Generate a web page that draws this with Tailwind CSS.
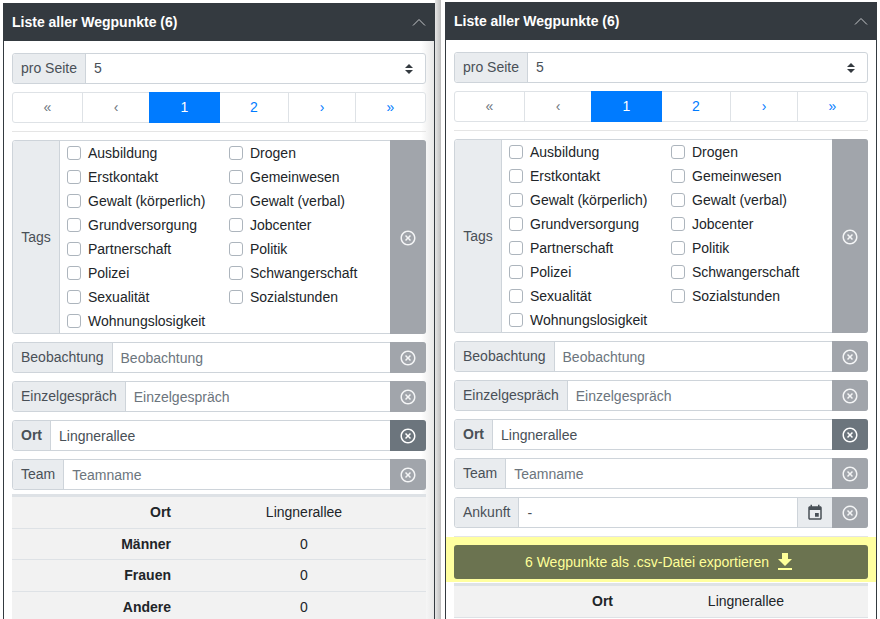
<!DOCTYPE html>
<html lang="de">
<head>
    <meta charset="UTF-8">
    <title>Liste aller Wegpunkte</title>
    <script src="https://cdn.jsdelivr.net/npm/@tailwindcss/browser@4"></script>
</head>
<body class="bg-white h-[619px] w-[880px] overflow-hidden flex font-['Liberation_Sans',Arial,sans-serif] text-[14px] leading-[21px] text-[#212529]">
    <!-- Linke Liste -->
    <section class="ml-[3px] mt-[3px] w-[432px] shrink-0 border-x border-[#343a40] h-[616px] overflow-hidden bg-gradient-to-r from-white via-white via-[97%] to-[#e8e8e8]">
        <header class="h-[38px] bg-[#343a40] text-white flex items-center justify-between pl-2 pr-2">
            <h2 class="font-bold text-[14px]">Liste aller Wegpunkte (6)</h2>
            <svg class="w-[14px] h-[8px]" viewBox="0 0 14 8" fill="none" stroke="#c4c6c9" stroke-width="1"><path d="M1 7.5 7 1.5l6 6"></path></svg>
        </header>
        <div class="px-2 pt-3">
            <div class="flex h-[31px] border border-[#ced4da] rounded-[3px] bg-white">
                <span class="bg-[#e9ecef] text-[#495057] px-2 pb-px flex items-center border-r border-[#ced4da] rounded-l-[3px]">pro Seite</span>
                <div class="flex-1 flex items-center justify-between pl-2 pr-3 text-[#495057]">
                    <span>5</span>
                    <svg class="w-[8px] h-[10px]" viewBox="0 0 8 10" fill="#343a40"><path d="M4 0 8 4H0zM4 10 0 6h8z"></path></svg>
                </div>
            </div>
            <nav class="mt-2 h-[31px] grid grid-cols-[70px_66px_71px_69px_67px_69px] border border-[#dee2e6] rounded-[3px] bg-white text-center text-[#007bff] items-stretch w-[414px]">
                <span class="flex items-center justify-center text-[#6c757d] border-r border-[#dee2e6]">«</span>
                <span class="flex items-center justify-center text-[#6c757d]">‹</span>
                <span class="flex items-center justify-center bg-[#007bff] text-white -my-px">1</span>
                <span class="flex items-center justify-center border-r border-[#dee2e6]">2</span>
                <span class="flex items-center justify-center border-r border-[#dee2e6]">›</span>
                <span class="flex items-center justify-center">»</span>
            </nav>
            <hr class="mt-2 mb-2 border-[#e5e5e5]">
            <div class="flex h-[194px] border border-[#ced4da] rounded-[3px] bg-white">
                <span class="w-[47px] bg-[#e9ecef] text-[#495057] flex items-center justify-center border-r border-[#ced4da] rounded-l-[3px]">Tags</span>
                <div class="flex-1 grid grid-cols-[162px_1fr] auto-rows-[24px] pl-[7px]">
                    <label class="flex items-center gap-[7px]"><input type="checkbox" class="appearance-none w-[14px] h-[14px] bg-white border border-[#adb5bd] rounded-[3px]">Ausbildung</label>
                    <label class="flex items-center gap-[7px]"><input type="checkbox" class="appearance-none w-[14px] h-[14px] bg-white border border-[#adb5bd] rounded-[3px]">Drogen</label>
                    <label class="flex items-center gap-[7px]"><input type="checkbox" class="appearance-none w-[14px] h-[14px] bg-white border border-[#adb5bd] rounded-[3px]">Erstkontakt</label>
                    <label class="flex items-center gap-[7px]"><input type="checkbox" class="appearance-none w-[14px] h-[14px] bg-white border border-[#adb5bd] rounded-[3px]">Gemeinwesen</label>
                    <label class="flex items-center gap-[7px]"><input type="checkbox" class="appearance-none w-[14px] h-[14px] bg-white border border-[#adb5bd] rounded-[3px]">Gewalt (körperlich)</label>
                    <label class="flex items-center gap-[7px]"><input type="checkbox" class="appearance-none w-[14px] h-[14px] bg-white border border-[#adb5bd] rounded-[3px]">Gewalt (verbal)</label>
                    <label class="flex items-center gap-[7px]"><input type="checkbox" class="appearance-none w-[14px] h-[14px] bg-white border border-[#adb5bd] rounded-[3px]">Grundversorgung</label>
                    <label class="flex items-center gap-[7px]"><input type="checkbox" class="appearance-none w-[14px] h-[14px] bg-white border border-[#adb5bd] rounded-[3px]">Jobcenter</label>
                    <label class="flex items-center gap-[7px]"><input type="checkbox" class="appearance-none w-[14px] h-[14px] bg-white border border-[#adb5bd] rounded-[3px]">Partnerschaft</label>
                    <label class="flex items-center gap-[7px]"><input type="checkbox" class="appearance-none w-[14px] h-[14px] bg-white border border-[#adb5bd] rounded-[3px]">Politik</label>
                    <label class="flex items-center gap-[7px]"><input type="checkbox" class="appearance-none w-[14px] h-[14px] bg-white border border-[#adb5bd] rounded-[3px]">Polizei</label>
                    <label class="flex items-center gap-[7px]"><input type="checkbox" class="appearance-none w-[14px] h-[14px] bg-white border border-[#adb5bd] rounded-[3px]">Schwangerschaft</label>
                    <label class="flex items-center gap-[7px]"><input type="checkbox" class="appearance-none w-[14px] h-[14px] bg-white border border-[#adb5bd] rounded-[3px]">Sexualität</label>
                    <label class="flex items-center gap-[7px]"><input type="checkbox" class="appearance-none w-[14px] h-[14px] bg-white border border-[#adb5bd] rounded-[3px]">Sozialstunden</label>
                    <label class="flex items-center gap-[7px]"><input type="checkbox" class="appearance-none w-[14px] h-[14px] bg-white border border-[#adb5bd] rounded-[3px]">Wohnungslosigkeit</label>
                </div>
                <button class="w-[36px] -my-px -mr-px pt-px bg-[#a1a5ab] flex items-center justify-center rounded-r-[3px]"><svg class="w-[18px] h-[18px]" viewBox="0 0 24 24" fill="#f4f5f6"><path d="M14.59 8 12 10.59 9.41 8 8 9.41 10.59 12 8 14.59 9.41 16 12 13.41 14.59 16 16 14.59 13.41 12 16 9.41 14.59 8zM12 2C6.47 2 2 6.47 2 12s4.47 10 10 10 10-4.47 10-10S17.53 2 12 2zm0 18c-4.41 0-8-3.59-8-8s3.59-8 8-8 8 3.59 8 8-3.59 8-8 8z"></path></svg></button>
            </div>
            <div class="mt-2 flex h-[31px] border border-[#ced4da] rounded-[3px] bg-white">
                <span class="bg-[#e9ecef] text-[#495057] px-2 flex items-center pb-px border-r border-[#ced4da] rounded-l-[3px]">Beobachtung</span>
                <span class="flex-1 pl-2 pt-px flex items-center text-[#6c757d]">Beobachtung</span>
                <button class="w-[36px] -my-px -mr-px bg-[#a1a5ab] flex items-center justify-center rounded-r-[3px]"><svg class="w-[18px] h-[18px]" viewBox="0 0 24 24" fill="#f4f5f6"><path d="M14.59 8 12 10.59 9.41 8 8 9.41 10.59 12 8 14.59 9.41 16 12 13.41 14.59 16 16 14.59 13.41 12 16 9.41 14.59 8zM12 2C6.47 2 2 6.47 2 12s4.47 10 10 10 10-4.47 10-10S17.53 2 12 2zm0 18c-4.41 0-8-3.59-8-8s3.59-8 8-8 8 3.59 8 8-3.59 8-8 8z"></path></svg></button>
            </div>
            <div class="mt-2 flex h-[31px] border border-[#ced4da] rounded-[3px] bg-white">
                <span class="bg-[#e9ecef] text-[#495057] px-2 flex items-center pb-px border-r border-[#ced4da] rounded-l-[3px]">Einzelgespräch</span>
                <span class="flex-1 pl-2 pt-px flex items-center text-[#6c757d]">Einzelgespräch</span>
                <button class="w-[36px] -my-px -mr-px bg-[#a1a5ab] flex items-center justify-center rounded-r-[3px]"><svg class="w-[18px] h-[18px]" viewBox="0 0 24 24" fill="#f4f5f6"><path d="M14.59 8 12 10.59 9.41 8 8 9.41 10.59 12 8 14.59 9.41 16 12 13.41 14.59 16 16 14.59 13.41 12 16 9.41 14.59 8zM12 2C6.47 2 2 6.47 2 12s4.47 10 10 10 10-4.47 10-10S17.53 2 12 2zm0 18c-4.41 0-8-3.59-8-8s3.59-8 8-8 8 3.59 8 8-3.59 8-8 8z"></path></svg></button>
            </div>
            <div class="mt-2 flex h-[31px] border border-[#ced4da] rounded-[3px] bg-white">
                <span class="bg-[#e9ecef] text-[#495057] font-bold px-2 flex items-center pb-px border-r border-[#ced4da] rounded-l-[3px]">Ort</span>
                <span class="flex-1 pl-2 pt-px flex items-center text-[#495057]">Lingnerallee</span>
                <button class="w-[36px] -my-px -mr-px bg-[#6c757d] flex items-center justify-center rounded-r-[3px]"><svg class="w-[18px] h-[18px]" viewBox="0 0 24 24" fill="#fff"><path d="M14.59 8 12 10.59 9.41 8 8 9.41 10.59 12 8 14.59 9.41 16 12 13.41 14.59 16 16 14.59 13.41 12 16 9.41 14.59 8zM12 2C6.47 2 2 6.47 2 12s4.47 10 10 10 10-4.47 10-10S17.53 2 12 2zm0 18c-4.41 0-8-3.59-8-8s3.59-8 8-8 8 3.59 8 8-3.59 8-8 8z"></path></svg></button>
            </div>
            <div class="mt-2 flex h-[31px] border border-[#ced4da] rounded-[3px] bg-white">
                <span class="bg-[#e9ecef] text-[#495057] px-2 flex items-center pb-px border-r border-[#ced4da] rounded-l-[3px]">Team</span>
                <span class="flex-1 pl-2 pt-px flex items-center text-[#6c757d]">Teamname</span>
                <button class="w-[36px] -my-px -mr-px bg-[#a1a5ab] flex items-center justify-center rounded-r-[3px]"><svg class="w-[18px] h-[18px]" viewBox="0 0 24 24" fill="#f4f5f6"><path d="M14.59 8 12 10.59 9.41 8 8 9.41 10.59 12 8 14.59 9.41 16 12 13.41 14.59 16 16 14.59 13.41 12 16 9.41 14.59 8zM12 2C6.47 2 2 6.47 2 12s4.47 10 10 10 10-4.47 10-10S17.53 2 12 2zm0 18c-4.41 0-8-3.59-8-8s3.59-8 8-8 8 3.59 8 8-3.59 8-8 8z"></path></svg></button>
            </div>
            <table class="mt-1 w-full table-fixed border-t-[3px] border-[#dee2e6] bg-[#f2f2f2]">
                <tbody>
                    <tr class="h-[33px] border-b border-[#dee2e6]"><th class="w-[167px] pr-2 pb-px text-right">Ort</th><td class="text-center pb-px pl-[3px]">Lingnerallee</td></tr>
                    <tr class="h-[31px] border-b border-[#dee2e6]"><th class="pr-2 text-right">Männer</th><td class="text-center pl-[3px]">0</td></tr>
                    <tr class="h-[32px] border-b border-[#dee2e6]"><th class="pr-2 text-right">Frauen</th><td class="text-center pl-[3px]">0</td></tr>
                    <tr class="h-[32px]"><th class="pr-2 text-right">Andere</th><td class="text-center pl-[3px]">0</td></tr>
                </tbody>
            </table>
        </div>
    </section>

    <!-- Trennleiste zwischen den Ansichten -->
    <div class="w-[10px] shrink-0 flex">
        <div class="w-[6px] bg-gradient-to-r from-[#e6e6e6] to-[#bdbdbd]"></div>
        <div class="w-[4px] bg-white"></div>
    </div>

    <!-- Rechte Liste -->
    <section class="mt-[2px] w-[432px] shrink-0 border-x border-[#343a40] h-[617px] overflow-hidden">
        <header class="h-[38px] bg-[#343a40] text-white flex items-center justify-between pl-2 pr-2">
            <h2 class="font-bold text-[14px]">Liste aller Wegpunkte (6)</h2>
            <svg class="w-[14px] h-[8px]" viewBox="0 0 14 8" fill="none" stroke="#c4c6c9" stroke-width="1"><path d="M1 7.5 7 1.5l6 6"></path></svg>
        </header>
        <div class="px-2 pt-3">
            <div class="flex h-[31px] border border-[#ced4da] rounded-[3px]">
                <span class="bg-[#e9ecef] text-[#495057] px-2 pb-px flex items-center border-r border-[#ced4da] rounded-l-[3px]">pro Seite</span>
                <div class="flex-1 flex items-center justify-between pl-2 pr-3 text-[#495057]">
                    <span>5</span>
                    <svg class="w-[8px] h-[10px]" viewBox="0 0 8 10" fill="#343a40"><path d="M4 0 8 4H0zM4 10 0 6h8z"></path></svg>
                </div>
            </div>
            <nav class="mt-2 h-[31px] grid grid-cols-[70px_66px_71px_69px_67px_69px] border border-[#dee2e6] rounded-[3px] text-center text-[#007bff] items-stretch w-[414px]">
                <span class="flex items-center justify-center text-[#6c757d] border-r border-[#dee2e6]">«</span>
                <span class="flex items-center justify-center text-[#6c757d]">‹</span>
                <span class="flex items-center justify-center bg-[#007bff] text-white -my-px">1</span>
                <span class="flex items-center justify-center border-r border-[#dee2e6]">2</span>
                <span class="flex items-center justify-center border-r border-[#dee2e6]">›</span>
                <span class="flex items-center justify-center">»</span>
            </nav>
            <hr class="mt-2 mb-2 border-[#e5e5e5]">
            <div class="flex h-[194px] border border-[#ced4da] rounded-[3px]">
                <span class="w-[47px] bg-[#e9ecef] text-[#495057] flex items-center justify-center border-r border-[#ced4da] rounded-l-[3px]">Tags</span>
                <div class="flex-1 grid grid-cols-[162px_1fr] auto-rows-[24px] pl-[7px]">
                    <label class="flex items-center gap-[7px]"><input type="checkbox" class="appearance-none w-[14px] h-[14px] bg-white border border-[#adb5bd] rounded-[3px]">Ausbildung</label>
                    <label class="flex items-center gap-[7px]"><input type="checkbox" class="appearance-none w-[14px] h-[14px] bg-white border border-[#adb5bd] rounded-[3px]">Drogen</label>
                    <label class="flex items-center gap-[7px]"><input type="checkbox" class="appearance-none w-[14px] h-[14px] bg-white border border-[#adb5bd] rounded-[3px]">Erstkontakt</label>
                    <label class="flex items-center gap-[7px]"><input type="checkbox" class="appearance-none w-[14px] h-[14px] bg-white border border-[#adb5bd] rounded-[3px]">Gemeinwesen</label>
                    <label class="flex items-center gap-[7px]"><input type="checkbox" class="appearance-none w-[14px] h-[14px] bg-white border border-[#adb5bd] rounded-[3px]">Gewalt (körperlich)</label>
                    <label class="flex items-center gap-[7px]"><input type="checkbox" class="appearance-none w-[14px] h-[14px] bg-white border border-[#adb5bd] rounded-[3px]">Gewalt (verbal)</label>
                    <label class="flex items-center gap-[7px]"><input type="checkbox" class="appearance-none w-[14px] h-[14px] bg-white border border-[#adb5bd] rounded-[3px]">Grundversorgung</label>
                    <label class="flex items-center gap-[7px]"><input type="checkbox" class="appearance-none w-[14px] h-[14px] bg-white border border-[#adb5bd] rounded-[3px]">Jobcenter</label>
                    <label class="flex items-center gap-[7px]"><input type="checkbox" class="appearance-none w-[14px] h-[14px] bg-white border border-[#adb5bd] rounded-[3px]">Partnerschaft</label>
                    <label class="flex items-center gap-[7px]"><input type="checkbox" class="appearance-none w-[14px] h-[14px] bg-white border border-[#adb5bd] rounded-[3px]">Politik</label>
                    <label class="flex items-center gap-[7px]"><input type="checkbox" class="appearance-none w-[14px] h-[14px] bg-white border border-[#adb5bd] rounded-[3px]">Polizei</label>
                    <label class="flex items-center gap-[7px]"><input type="checkbox" class="appearance-none w-[14px] h-[14px] bg-white border border-[#adb5bd] rounded-[3px]">Schwangerschaft</label>
                    <label class="flex items-center gap-[7px]"><input type="checkbox" class="appearance-none w-[14px] h-[14px] bg-white border border-[#adb5bd] rounded-[3px]">Sexualität</label>
                    <label class="flex items-center gap-[7px]"><input type="checkbox" class="appearance-none w-[14px] h-[14px] bg-white border border-[#adb5bd] rounded-[3px]">Sozialstunden</label>
                    <label class="flex items-center gap-[7px]"><input type="checkbox" class="appearance-none w-[14px] h-[14px] bg-white border border-[#adb5bd] rounded-[3px]">Wohnungslosigkeit</label>
                </div>
                <button class="w-[36px] -my-px -mr-px pt-px bg-[#a1a5ab] flex items-center justify-center rounded-r-[3px]"><svg class="w-[18px] h-[18px]" viewBox="0 0 24 24" fill="#f4f5f6"><path d="M14.59 8 12 10.59 9.41 8 8 9.41 10.59 12 8 14.59 9.41 16 12 13.41 14.59 16 16 14.59 13.41 12 16 9.41 14.59 8zM12 2C6.47 2 2 6.47 2 12s4.47 10 10 10 10-4.47 10-10S17.53 2 12 2zm0 18c-4.41 0-8-3.59-8-8s3.59-8 8-8 8 3.59 8 8-3.59 8-8 8z"></path></svg></button>
            </div>
            <div class="mt-2 flex h-[31px] border border-[#ced4da] rounded-[3px]">
                <span class="bg-[#e9ecef] text-[#495057] px-2 flex items-center pb-px border-r border-[#ced4da] rounded-l-[3px]">Beobachtung</span>
                <span class="flex-1 pl-2 pt-px flex items-center text-[#6c757d]">Beobachtung</span>
                <button class="w-[36px] -my-px -mr-px bg-[#a1a5ab] flex items-center justify-center rounded-r-[3px]"><svg class="w-[18px] h-[18px]" viewBox="0 0 24 24" fill="#f4f5f6"><path d="M14.59 8 12 10.59 9.41 8 8 9.41 10.59 12 8 14.59 9.41 16 12 13.41 14.59 16 16 14.59 13.41 12 16 9.41 14.59 8zM12 2C6.47 2 2 6.47 2 12s4.47 10 10 10 10-4.47 10-10S17.53 2 12 2zm0 18c-4.41 0-8-3.59-8-8s3.59-8 8-8 8 3.59 8 8-3.59 8-8 8z"></path></svg></button>
            </div>
            <div class="mt-2 flex h-[31px] border border-[#ced4da] rounded-[3px]">
                <span class="bg-[#e9ecef] text-[#495057] px-2 flex items-center pb-px border-r border-[#ced4da] rounded-l-[3px]">Einzelgespräch</span>
                <span class="flex-1 pl-2 pt-px flex items-center text-[#6c757d]">Einzelgespräch</span>
                <button class="w-[36px] -my-px -mr-px bg-[#a1a5ab] flex items-center justify-center rounded-r-[3px]"><svg class="w-[18px] h-[18px]" viewBox="0 0 24 24" fill="#f4f5f6"><path d="M14.59 8 12 10.59 9.41 8 8 9.41 10.59 12 8 14.59 9.41 16 12 13.41 14.59 16 16 14.59 13.41 12 16 9.41 14.59 8zM12 2C6.47 2 2 6.47 2 12s4.47 10 10 10 10-4.47 10-10S17.53 2 12 2zm0 18c-4.41 0-8-3.59-8-8s3.59-8 8-8 8 3.59 8 8-3.59 8-8 8z"></path></svg></button>
            </div>
            <div class="mt-2 flex h-[31px] border border-[#ced4da] rounded-[3px]">
                <span class="bg-[#e9ecef] text-[#495057] font-bold px-2 flex items-center pb-px border-r border-[#ced4da] rounded-l-[3px]">Ort</span>
                <span class="flex-1 pl-2 pt-px flex items-center text-[#495057]">Lingnerallee</span>
                <button class="w-[36px] -my-px -mr-px bg-[#6c757d] flex items-center justify-center rounded-r-[3px]"><svg class="w-[18px] h-[18px]" viewBox="0 0 24 24" fill="#fff"><path d="M14.59 8 12 10.59 9.41 8 8 9.41 10.59 12 8 14.59 9.41 16 12 13.41 14.59 16 16 14.59 13.41 12 16 9.41 14.59 8zM12 2C6.47 2 2 6.47 2 12s4.47 10 10 10 10-4.47 10-10S17.53 2 12 2zm0 18c-4.41 0-8-3.59-8-8s3.59-8 8-8 8 3.59 8 8-3.59 8-8 8z"></path></svg></button>
            </div>
            <div class="mt-2 flex h-[31px] border border-[#ced4da] rounded-[3px]">
                <span class="bg-[#e9ecef] text-[#495057] px-2 flex items-center pb-px border-r border-[#ced4da] rounded-l-[3px]">Team</span>
                <span class="flex-1 pl-2 pt-px flex items-center text-[#6c757d]">Teamname</span>
                <button class="w-[36px] -my-px -mr-px bg-[#a1a5ab] flex items-center justify-center rounded-r-[3px]"><svg class="w-[18px] h-[18px]" viewBox="0 0 24 24" fill="#f4f5f6"><path d="M14.59 8 12 10.59 9.41 8 8 9.41 10.59 12 8 14.59 9.41 16 12 13.41 14.59 16 16 14.59 13.41 12 16 9.41 14.59 8zM12 2C6.47 2 2 6.47 2 12s4.47 10 10 10 10-4.47 10-10S17.53 2 12 2zm0 18c-4.41 0-8-3.59-8-8s3.59-8 8-8 8 3.59 8 8-3.59 8-8 8z"></path></svg></button>
            </div>
            <div class="mt-2 flex h-[31px] border border-[#ced4da] rounded-[3px]">
                <span class="bg-[#e9ecef] text-[#495057] px-2 flex items-center pb-px border-r border-[#ced4da] rounded-l-[3px]">Ankunft</span>
                <span class="flex-1 pl-2 pt-px flex items-center text-[#495057]">-</span>
                <span class="w-[35px] bg-[#e9ecef] border-l border-[#ced4da] flex items-center justify-center"><svg class="w-[18px] h-[18px]" viewBox="0 0 24 24" fill="#495057"><path d="M17 12h-5v5h5v-5zM16 1v2H8V1H6v2H5c-1.11 0-1.99.9-1.99 2L3 19c0 1.1.89 2 2 2h14c1.1 0 2-.9 2-2V5c0-1.1-.9-2-2-2h-1V1h-2zm3 18H5V8h14v11z"></path></svg></span>
                <button class="w-[36px] -my-px -mr-px bg-[#a1a5ab] flex items-center justify-center rounded-r-[3px]"><svg class="w-[18px] h-[18px]" viewBox="0 0 24 24" fill="#f4f5f6"><path d="M14.59 8 12 10.59 9.41 8 8 9.41 10.59 12 8 14.59 9.41 16 12 13.41 14.59 16 16 14.59 13.41 12 16 9.41 14.59 8zM12 2C6.47 2 2 6.47 2 12s4.47 10 10 10 10-4.47 10-10S17.53 2 12 2zm0 18c-4.41 0-8-3.59-8-8s3.59-8 8-8 8 3.59 8 8-3.59 8-8 8z"></path></svg></button>
            </div>
            <hr class="mt-2 border-[#e5e5e5]">
            <div class="-mx-2 bg-[#ffffa0] px-2 pt-2 h-[45px]">
                <button class="w-full h-[34px] bg-[#6b7350] text-[#ffff99] rounded-[3px] flex items-center justify-center gap-1">6 Wegpunkte als .csv-Datei exportieren <svg class="w-[24px] h-[24px]" viewBox="0 0 24 24" fill="#ffff99"><path d="M19 9h-4V3H9v6H5l7 7 7-7zM5 18v2h14v-2H5z"></path></svg></button>
            </div>
            <table class="mt-px w-full table-fixed border-t-[3px] border-[#dee2e6] bg-[#f2f2f2]">
                <tbody>
                    <tr class="h-[33px] border-b border-[#dee2e6]"><th class="w-[167px] pr-2 pb-px text-right">Ort</th><td class="text-center pb-px pl-[3px]">Lingnerallee</td></tr>
                </tbody>
            </table>
        </div>
    </section>
</body>
</html>
